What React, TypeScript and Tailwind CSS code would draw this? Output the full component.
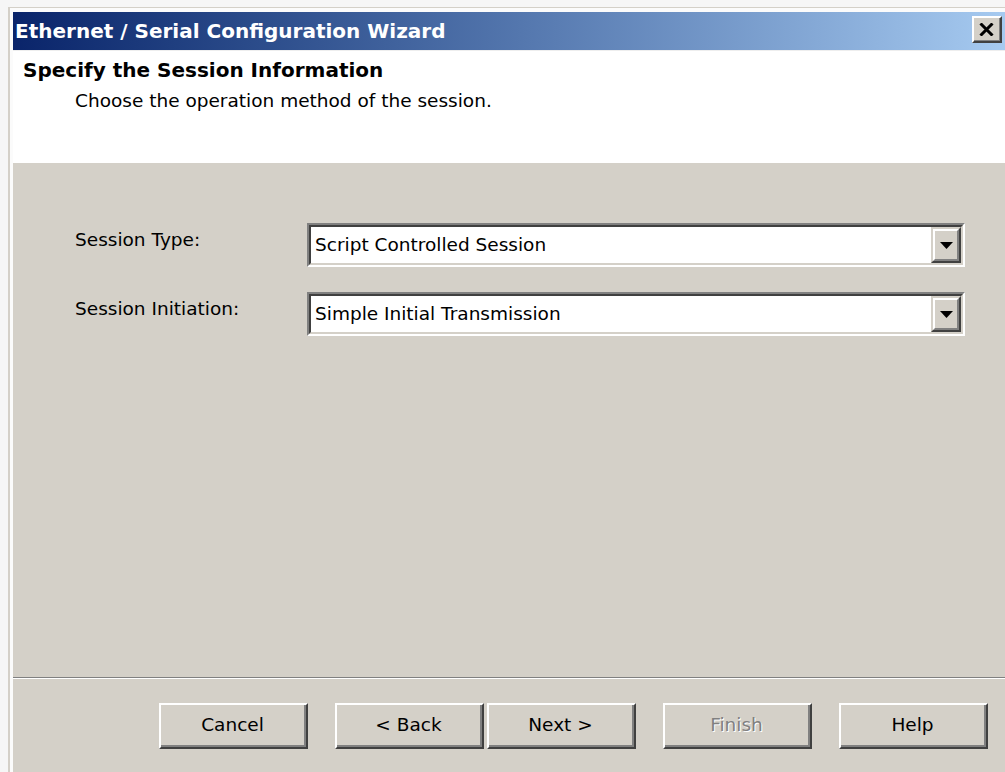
import React from 'react';

const ui = "font-['DejaVu_Sans',sans-serif]";

// Classic raised push button
const PushButton: React.FC<{ label: string; disabled?: boolean }> = ({ label, disabled }) => (
    <div className="h-[46px] w-[149px] border-2 border-t-white border-l-white border-b-[#404040] border-r-[#404040] bg-[#d4d0c8]">
        <div className="flex h-full items-center justify-center border-b-2 border-r-2 border-b-[#808080] border-r-[#808080]">
            <span
                className={
                    disabled
                        ? 'text-[18.5px] text-[#808080] [text-shadow:1px_1px_0_#ffffff]'
                        : 'text-[18.5px] text-black'
                }
            >
                {label}
            </span>
        </div>
    </div>
);

// Sunken drop-down list with its arrow button
const ComboBox: React.FC<{ value: string }> = ({ value }) => (
    <div className="h-[44px] w-[658px] border-2 border-t-[#808080] border-l-[#808080] border-b-white border-r-white">
        <div className="flex h-full border-2 border-t-[#404040] border-l-[#404040] border-b-[#d4d0c8] border-r-[#d4d0c8] bg-white">
            <span className="flex-1 self-center pl-[4px] text-[18.5px] text-black">{value}</span>
            <div className="h-full w-[30px] border-2 border-t-[#d4d0c8] border-l-[#d4d0c8] border-b-[#404040] border-r-[#404040] bg-[#d4d0c8]">
                <div className="flex h-full items-center justify-center border-2 border-t-white border-l-white border-b-[#808080] border-r-[#808080]">
                    <svg width="13" height="7" viewBox="0 0 13 7">
                        <polygon points="0,0 13,0 6.5,7" fill="#000" />
                    </svg>
                </div>
            </div>
        </div>
    </div>
);

const FieldRow: React.FC<{ label: string; value: string }> = ({ label, value }) => (
    <div className="flex items-start">
        <div className="w-[232px] pt-[3px] text-[18.5px] text-black">{label}</div>
        <ComboBox value={value} />
    </div>
);

export default function App() {
    return (
        <div className={`h-[772px] w-[1005px] overflow-hidden bg-[#f6f6f6] pl-[8px] pt-[7px] ${ui}`}>
            <div className="flex h-full flex-col border-l-2 border-t border-[#d4d0c8]">
                <div className="flex h-full flex-col border-l-[3px] border-t-[4px] border-[#fbfbfb]">
                    {/* title bar */}
                    <div className="flex h-[38px] shrink-0 items-start bg-gradient-to-r from-[#0a246a] to-[#a6caf0]">
                        <span className="flex-1 pl-[2px] pt-[8px] text-[20px] font-bold leading-[22px] text-white">
                            Ethernet / Serial Configuration Wizard
                        </span>
                        <div className="mr-[3px] mt-[4px] h-[27px] w-[30px] border-2 border-t-white border-l-white border-b-[#404040] border-r-[#404040] bg-[#d4d0c8]">
                            <div className="flex h-full items-center justify-center border-b border-r border-[#808080]">
                                <svg width="15" height="13" viewBox="0 0 15 13">
                                    <path d="M1.5 0.5 L13.5 12.5 M13.5 0.5 L1.5 12.5" stroke="#000" strokeWidth="3" />
                                </svg>
                            </div>
                        </div>
                    </div>

                    {/* header */}
                    <div className="h-[113px] shrink-0 border-t border-[#eeeeee] bg-white pl-[10px] pt-[7px]">
                        <div className="text-[20px] font-bold leading-[24px] text-black">Specify the Session Information</div>
                        <div className="pl-[52px] pt-[8px] text-[18.5px] leading-[22px] text-black">
                            Choose the operation method of the session.
                        </div>
                    </div>

                    {/* body */}
                    <div className="flex flex-1 flex-col bg-[#d4d0c8]">
                        <div className="flex flex-col gap-[25px] pl-[62px] pt-[60px]">
                            <FieldRow label="Session Type:" value="Script Controlled Session" />
                            <FieldRow label="Session Initiation:" value="Simple Initial Transmission" />
                        </div>
                        <div className="flex-1" />
                        <div className="h-px bg-[#808080]" />
                        <div className="h-px bg-white" />
                        <div className="flex justify-end pb-[23px] pr-[17px] pt-[24px]">
                            <div className="mr-[27px]">
                                <PushButton label="Cancel" />
                            </div>
                            <div className="mr-[3px]">
                                <PushButton label="< Back" />
                            </div>
                            <div className="mr-[27px]">
                                <PushButton label="Next >" />
                            </div>
                            <div className="mr-[27px]">
                                <PushButton label="Finish" disabled />
                            </div>
                            <PushButton label="Help" />
                        </div>
                    </div>
                </div>
            </div>
        </div>
    );
}
